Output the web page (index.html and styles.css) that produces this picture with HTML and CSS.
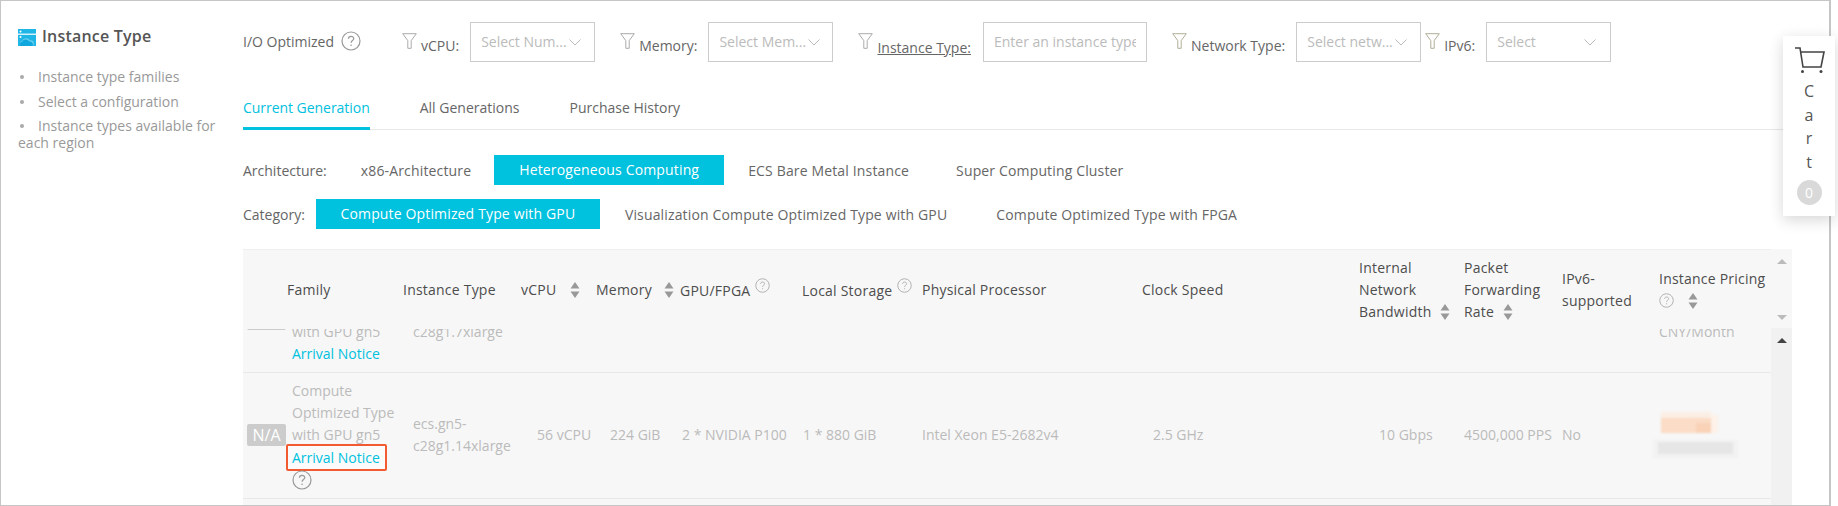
FILE: index.html
```html
<!DOCTYPE html>
<html lang="en">
<head>
<meta charset="utf-8">
<title>Instance Type</title>
<link rel="stylesheet" href="styles.css">
</head>
<body>
<div class="frame">
  <aside class="side">
    <h2 class="side-title">
      <svg class="logo" viewBox="0 0 18 17"><rect width="18" height="17" fill="#1fb6e6"/><rect x="0" y="4.600" width="18" height="1.200" fill="#fff"/><circle cx="2.500" cy="2.400" r="1" fill="#fff"/><circle cx="2.500" cy="8" r="1" fill="#fff"/><path d="M4 17c-2.600-.4-3.200-4.400.2-5 .8-3.200 6-3.800 7.600-.6 3.600-.6 5.400 3.400 3.200 5.600z" fill="#fff" opacity=".35"/><path d="M3 17c-1.800-1-1.200-4 1.200-4.200 1-3 5.600-3 7-.2 2.800-.4 4.600 2.400 3.400 4.400z" fill="#0fa7de"/></svg>
      <span class="side-name">Instance Type</span>
    </h2>
    <ul class="side-list">
      <li>Instance type families</li>
      <li>Select a configuration</li>
      <li>Instance types available for each region</li>
    </ul>
  </aside>

  <main class="main">
    <div class="filters">
      <span class="io">I/O Optimized</span>
      <svg class="help help-big" viewBox="0 0 20 20"><use href="#q"/></svg>
      <div class="filter filter-first">
        <svg class="funnel" viewBox="0 0 15 16"><use href="#fn"/></svg>
        <span class="flabel">vCPU:</span>
        <div class="select"><span class="ph">Select Num...</span><svg class="chev" viewBox="0 0 12 7"><use href="#ch"/></svg></div>
      </div>
      <div class="filter">
        <svg class="funnel" viewBox="0 0 15 16"><use href="#fn"/></svg>
        <span class="flabel">Memory:</span>
        <div class="select"><span class="ph">Select Mem...</span><svg class="chev" viewBox="0 0 12 7"><use href="#ch"/></svg></div>
      </div>
      <div class="filter">
        <svg class="funnel" viewBox="0 0 15 16"><use href="#fn"/></svg>
        <span class="flabel flabel-under">Instance Type:</span>
        <div class="select select-input"><span class="ph ph-clip">Enter an instance type</span></div>
      </div>
      <div class="filter">
        <svg class="funnel funnel-warm" viewBox="0 0 15 16"><use href="#fn"/></svg>
        <span class="flabel">Network Type:</span>
        <div class="select"><span class="ph">Select netw...</span><svg class="chev" viewBox="0 0 12 7"><use href="#ch"/></svg></div>
      </div>
      <div class="filter filter-tight">
        <svg class="funnel funnel-warm" viewBox="0 0 15 16"><use href="#fn"/></svg>
        <span class="flabel">IPv6:</span>
        <div class="select select-spread"><span class="ph">Select</span><svg class="chev" viewBox="0 0 12 7"><use href="#ch"/></svg></div>
      </div>
    </div>

    <nav class="tabs">
      <a class="tab tab-on">Current Generation</a>
      <a class="tab">All Generations</a>
      <a class="tab">Purchase History</a>
    </nav>

    <div class="pick pick-arch">
      <span class="pick-label">Architecture:</span>
      <a class="opt opt-x86">x86-Architecture</a>
      <a class="opt opt-on opt-hetero">Heterogeneous Computing</a>
      <a class="opt opt-ecs">ECS Bare Metal Instance</a>
      <a class="opt opt-super">Super Computing Cluster</a>
    </div>
    <div class="pick pick-cat">
      <span class="pick-label">Category:</span>
      <a class="opt opt-on opt-gpu">Compute Optimized Type with GPU</a>
      <a class="opt opt-vis">Visualization Compute Optimized Type with GPU</a>
      <a class="opt opt-fpga">Compute Optimized Type with FPGA</a>
    </div>

    <div class="grid-wrap">
      <div class="grid">
        <div class="grid-head">
          <table class="tbl">
            <colgroup><col class="c0"><col class="c1"><col class="c2"><col class="c3"><col class="c4"><col class="c5"><col class="c6"><col class="c7"><col class="c8"><col class="c9"><col class="c10"><col class="c11"><col class="c12"></colgroup>
            <tr>
              <th></th>
              <th>Family</th>
              <th>Instance Type</th>
              <th>vCPU<svg class="sort sort-a" viewBox="0 0 10 16"><use href="#so"/></svg></th>
              <th>Memory<svg class="sort sort-b" viewBox="0 0 10 16"><use href="#so"/></svg></th>
              <th>GPU/FPGA<svg class="help help-th" viewBox="0 0 20 20"><use href="#q"/></svg></th>
              <th>Local Storage<svg class="help help-th" viewBox="0 0 20 20"><use href="#q"/></svg></th>
              <th>Physical Processor</th>
              <th>Clock Speed</th>
              <th>Internal Network Bandwidth<svg class="sort sort-c" viewBox="0 0 10 16"><use href="#so"/></svg></th>
              <th>Packet Forwarding Rate<svg class="sort sort-d" viewBox="0 0 10 16"><use href="#so"/></svg></th>
              <th>IPv6-<br>supported</th>
              <th>Instance Pricing<br><svg class="help help-price" viewBox="0 0 20 20"><use href="#q"/></svg><svg class="sort sort-e" viewBox="0 0 10 16"><use href="#so"/></svg></th>
            </tr>
          </table>
        </div>
        <div class="grid-body">
          <table class="tbl tbl-scrolled">
            <colgroup><col class="c0"><col class="c1"><col class="c2"><col class="c3"><col class="c4"><col class="c5"><col class="c6"><col class="c7"><col class="c8"><col class="c9"><col class="c10"><col class="c11"><col class="c12"></colgroup>
            <tr class="row row-a">
              <td><span class="na"></span></td>
              <td class="p1">with GPU gn5<br><a class="notice">Arrival Notice</a></td>
              <td class="p2">c28g1.7xlarge</td>
              <td></td>
              <td></td>
              <td></td>
              <td></td>
              <td></td>
              <td></td>
              <td></td>
              <td></td>
              <td></td>
              <td>CNY/Month</td>
            </tr>
            <tr class="row row-b">
              <td><span class="na">N/A</span></td>
              <td class="p1">Compute Optimized Type with GPU gn5<br><span class="mark"><a class="notice">Arrival Notice</a></span><br><svg class="help help-row" viewBox="0 0 20 20"><use href="#q"/></svg></td>
              <td class="p2">ecs.gn5-<br>c28g1.14xlarge</td>
              <td class="p3">56 vCPU</td>
              <td class="p4">224 GiB</td>
              <td class="p5">2 * NVIDIA P100</td>
              <td class="p6">1 * 880 GiB</td>
              <td>Intel Xeon E5-2682v4</td>
              <td class="p8">2.5 GHz</td>
              <td class="p9">10 Gbps</td>
              <td>4500,000 PPS</td>
              <td>No</td>
              <td>
                <svg class="mosaic" viewBox="0 0 18 9" shape-rendering="crispEdges" preserveAspectRatio="none">
                  <path d="M1.500 0h10v1.200h-10z" fill="#fbeee4"/>
                  <path d="M1.500 1.200h10v3h-10z" fill="#fbdcc6"/>
                  <path d="M8.500 2.200h3v2h-3z" fill="#f9d2b8"/>
                  <path d="M11.500 .6h1.500v3.600h-1.500z" fill="#fdf1e8"/>
                  <path d="M0 5.500h17v3.500H0z" fill="#f2f2f2"/>
                  <path d="M1 5.800h15v2.400H1z" fill="#e6e6e6"/>
                </svg>
              </td>
            </tr>
          </table>
        </div>
      </div>
      <div class="bar">
        <div class="bar-top"><i class="tri tri-up"></i><i class="tri tri-down"></i></div>
        <div class="bar-low"><i class="tri tri-dark"></i></div>
      </div>
    </div>
  </main>

  <aside class="cart">
    <svg class="cart-ico" viewBox="0 0 31 26"><path d="M1 1h5l3 19h18l3-15H6.800" fill="none" stroke="#444" stroke-width="1.600"/><circle cx="8.500" cy="24.500" r="1.500" fill="#444"/><circle cx="27" cy="24.500" r="1.500" fill="#444"/></svg>
    <span class="cart-l">C</span><span class="cart-l">a</span><span class="cart-l">r</span><span class="cart-l">t</span>
    <span class="cart-n">0</span>
  </aside>
</div>

<svg class="defs" width="0" height="0">
  <defs>
    <g id="q"><circle cx="10" cy="10" r="9" fill="none" stroke="currentColor" stroke-width="1.200"/><path d="M7.400 7.800c0-3.200 5.400-3.200 5.400-.2 0 2-2.700 2-2.700 4.200" fill="none" stroke="currentColor" stroke-width="1.200"/><circle cx="10.100" cy="14.300" r=".8" fill="currentColor"/></g>
    <path id="fn" d="M.7.700h13.600L9.200 7.600v7.700H5.800V7.600z" fill="none" stroke="currentColor" stroke-width="1"/>
    <path id="ch" d="M.5.500l5.500 5.500 5.500-5.500" fill="none" stroke="currentColor" stroke-width="1"/>
    <path id="so" d="M5 0l4.500 6.500H.5zM5 16L.5 9.500h9z" fill="currentColor"/>
  </defs>
</svg>
</body>
</html>
```

FILE: styles.css
```css
* { box-sizing: border-box; }
html, body { margin: 0; padding: 0; height: 506px; overflow: hidden; background: #fff; }
body { font-family: "Open Sans", "Liberation Sans", sans-serif; font-size: 14px; color: #666; }
.defs { position: absolute; }

.frame { position: relative; display: flex; width: 1831px; height: 506px; border: 1px solid #c6c6c6; border-width: 1px 2px 1px 1px; }

.side { width: 242px; flex: none; padding: 28px 0 0 17px; }
.side-title { display: flex; align-items: center; gap: 6px; margin: 0; height: 17px; font-size: 16px; font-weight: 600; color: #555; letter-spacing: .2px; }
.side-name { margin-top: -3px; }
.logo { width: 18px; height: 17px; flex: none; }
.side-list { list-style: none; margin: 22px 0 0; padding: 0; width: 212px; color: #999; line-height: 17px; }
.side-list li { position: relative; margin-bottom: 7.500px; text-indent: 20px; }
.side-list li::before { content: ""; position: absolute; left: 2px; top: 7px; width: 4px; height: 4px; border-radius: 50%; background: #aaa; }

.main { flex: 1; min-width: 0; padding-top: 21px; }

.filters { display: flex; align-items: center; height: 40px; }
.io { margin-right: 7px; position: relative; top: -1px; }
.help { color: #999; flex: none; }
.help-big { width: 20px; height: 20px; margin-top: -3px; }
.filter { display: flex; align-items: center; margin-left: 25px; }
.filter-first { margin-left: 41px; }
.filter-tight { margin-left: 4px; }
.funnel { width: 15px; height: 16px; color: #aaa; margin-right: 4px; flex: none; position: relative; top: -1px; }
.funnel-warm { color: #b0ae98; }
.flabel { margin-right: 11px; position: relative; top: 3px; white-space: nowrap; color: #666; }
.flabel-under { text-decoration: underline; top: 5px; margin-right: 12px; }
.select { display: flex; align-items: center; width: 125px; height: 40px; padding: 0 10px; border: 1px solid #ccc; color: #bbb; }
.select-input { width: 164px; }
.select-spread { justify-content: space-between; padding-right: 14px; }
.ph { white-space: nowrap; position: relative; top: -1px; }
.ph-clip { display: block; overflow: hidden; }
.chev { width: 12px; height: 7px; margin-left: 2px; color: #bbb; flex: none; }

.tabs { display: flex; gap: 50px; height: 38px; margin-top: 30px; border-bottom: 1px solid #e8e8e8; width: 1587px; }
.tab { height: 38px; line-height: 32px; color: #666; white-space: nowrap; }
.tab-on { color: #00c1de; border-bottom: 3px solid #00c1de; letter-spacing: -.04px; }

.pick { display: flex; align-items: center; height: 30px; }
.pick-arch { margin-top: 25px; }
.pick-cat { margin-top: 14px; }
.pick-label { color: #666; white-space: nowrap; }
.opt { color: #666; white-space: nowrap; letter-spacing: .15px; }
.opt-on { height: 30px; line-height: 30px; background: #00c1de; color: #fff; text-align: center; }
.opt-x86 { margin-left: 34px; }
.opt-hetero { width: 230px; margin-left: 23px; }
.opt-ecs { margin-left: 24px; }
.opt-super { margin-left: 47px; }
.opt-gpu { width: 284px; margin-left: 11px; }
.opt-vis { margin-left: 25px; }
.opt-fpga { margin-left: 49px; }

.grid-wrap { display: flex; align-items: stretch; margin-top: 20px; width: 1549px; height: 256px; }
.grid { width: 1528px; flex: none; background: #f7f7f7; border-top: 1px solid #efefef; }
.grid-head { height: 79px; overflow: hidden; }
.grid-body { height: 176px; overflow: hidden; }
.tbl { table-layout: fixed; border-collapse: collapse; width: 1528px; }
.tbl-scrolled { margin-top: -59px; }
.c0 { width: 44px; } .c1 { width: 116px; } .c2 { width: 118px; } .c3 { width: 75px; } .c4 { width: 84px; }
.c5 { width: 122px; } .c6 { width: 120px; } .c7 { width: 220px; } .c8 { width: 217px; } .c9 { width: 105px; }
.c10 { width: 98px; } .c11 { width: 97px; } .c12 { width: 112px; }
.tbl th { height: 79px; padding: 0; font-weight: 400; color: #4d4d4d; text-align: left; line-height: 22px; vertical-align: middle; letter-spacing: .22px; }
.tbl td { padding: 0; color: #bbb; line-height: 22px; vertical-align: middle; }
.row td { border-bottom: 1px solid #e8e8e8; }
.row-a td { height: 102px; }
.row-a td.p2, .row-a td:last-child { padding-top: 23px; }
.row-a td.p1 { padding-top: 44px; }
.row-b td { height: 126px; }
.tbl .p1 { padding-left: 5px; }
.tbl .p2 { padding-left: 10px; }
.tbl .p3 { padding-left: 16px; }
.tbl .p4 { padding-left: 14px; }
.tbl .p5 { padding-left: 2px; }
.tbl .p6 { padding-left: 1px; }
.tbl .p8 { padding-left: 11px; }
.tbl .p9 { padding-left: 20px; }

.na { display: block; width: 39px; height: 22px; margin-left: 4px; line-height: 22px; background: #ccc; color: #fff; text-align: center; border-radius: 2px; font-size: 16px; }
.row-a .na { position: relative; top: -2px; }
.notice { color: #00c1de; white-space: nowrap; }
.mark { display: inline-block; height: 27px; line-height: 23px; margin: -2px 0 -3px -6px; padding: 0 5px 0 4px; border: 2px solid #f25a31; border-radius: 2px; vertical-align: top; background: #fbfbfb; }
.help-row { width: 20px; height: 20px; vertical-align: middle; margin-top: 1px; }
.help-th { width: 15px; height: 15px; margin-left: 5px; vertical-align: 3px; color: #aaa; }
.help-price { width: 15px; height: 15px; vertical-align: -2px; color: #aaa; }
.sort { width: 10px; height: 16px; color: #999; vertical-align: -3px; }
.sort-a { margin-left: 14px; }
.sort-b { margin-left: 12px; }
.sort-c { margin-left: 9px; }
.sort-d { margin-left: 9px; }
.sort-e { margin-left: 14px; vertical-align: -3px; }
.mosaic { display: block; width: 90px; height: 46px; margin-left: -6px; filter: blur(1px); }

.bar { width: 21px; flex: none; background: #f1f1f1; display: flex; flex-direction: column; }
.bar-top { height: 79px; background: #f7f7f7; display: flex; flex-direction: column; justify-content: space-between; align-items: center; padding: 10px 0 8px; }
.bar-low { flex: 1; display: flex; justify-content: center; padding-top: 10px; }
.tri { display: block; width: 0; height: 0; border-left: 5px solid transparent; border-right: 5px solid transparent; }
.tri-up { border-bottom: 5px solid #bbb; }
.tri-down { border-top: 5px solid #bbb; }
.tri-dark { border-bottom: 5px solid #444; }

.cart { position: absolute; left: 1782px; top: 35px; width: 52px; height: 180px; background: #fff; box-shadow: 0 4px 14px rgba(0,0,0,.16); display: flex; flex-direction: column; align-items: center; padding-top: 11px; }
.cart-ico { width: 31px; height: 26px; flex: none; margin-bottom: 7px; }
.cart-l { height: 23.500px; line-height: 23.500px; font-size: 16px; color: #555; }
.cart-n { width: 25px; height: 25px; margin-top: 6px; border-radius: 50%; background: #d9d9d9; color: #fff; text-align: center; line-height: 25px; }
```
